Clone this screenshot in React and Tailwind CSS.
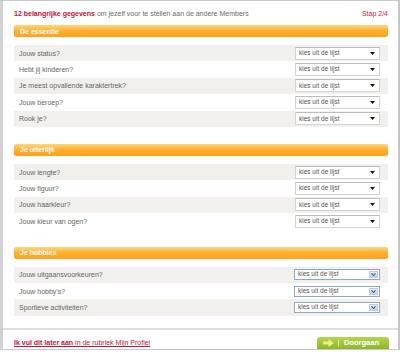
import React from 'react';

const sections = [
  {
    title: 'De essentie',
    kind: 'plain',
    rows: ['Jouw status?', 'Hebt jij kinderen?', 'Je meest opvallende karaktertrek?', 'Jouw beroep?', 'Rook je?'],
  },
  {
    title: 'Je uiterlijk',
    kind: 'plain',
    rows: ['Jouw lengte?', 'Jouw figuur?', 'Jouw haarkleur?', 'Jouw kleur van ogen?'],
  },
  {
    title: 'Je hobbies',
    kind: 'xp',
    rows: ['Jouw uitgaansvoorkeuren?', "Jouw hobby's?", 'Sportieve activiteiten?'],
  },
];

const PlainSelect = () => (
  <div className="w-[85px] h-[13px] bg-white border border-[#d2d2d2] border-t-[#bcbcbc] flex items-center justify-between pl-[3px] pr-[4px]">
    <span className="text-[6.5px] text-[#555] leading-none">kies uit de lijst</span>
    <svg width="5" height="3" viewBox="0 0 5 3">
      <path d="M0 0h5L2.5 3z" fill="#111" />
    </svg>
  </div>
);

const XpSelect = () => (
  <div className="w-[86px] h-[11px] bg-white border border-[#8fa8c6] flex items-stretch">
    <span className="flex-1 pl-[3px] flex items-center text-[6.5px] text-[#555] leading-none">kies uit de lijst</span>
    <span className="w-[9px] m-[1px] bg-gradient-to-b from-[#e3ebfb] to-[#c0d1f0] border border-[#bccbea] flex items-center justify-center">
      <svg width="5" height="3" viewBox="0 0 5 3">
        <path d="M0.5 0.3L2.5 2.5L4.5 0.3" stroke="#4d6185" strokeWidth="1.1" fill="none" />
      </svg>
    </span>
  </div>
);

const Section = ({ title, kind, rows }) => (
  <div>
    <div className="h-[12px] rounded-[2px] bg-gradient-to-b from-[#ffd77a] via-[#ffae2c] to-[#ffa21a] flex items-center pl-[6px]">
      <span className="text-[7px] font-bold text-white leading-none">{title}</span>
    </div>
    <div className="mt-[8px]">
      {rows.map((label, i) => (
        <div
          key={label}
          className={`h-[16.4px] flex items-center justify-between pl-[5px] pr-[8px] ${i % 2 === 0 ? 'bg-[#f1f0ec]' : 'bg-white'}`}
        >
          <span className="text-[7px] text-[#666] leading-none">{label}</span>
          {kind === 'xp' ? <XpSelect /> : <PlainSelect />}
        </div>
      ))}
    </div>
  </div>
);

export default function App() {
  return (
    <div
      className="w-[400px] h-[352px] bg-white overflow-hidden"
      style={{ fontFamily: '"Liberation Sans", Arial, sans-serif' }}
    >
      <div className="h-[350px] border-t border-t-[#c8c8c8] border-l-[3px] border-l-[#d2d2d2] border-r-[2px] border-r-[#c6c6c6] border-b border-b-[#c8c8c8] flex flex-col">
        <div className="pl-[11px] pr-[10px]">
          <div className="h-[19px] pt-[6px] flex items-center justify-between">
            <p className="text-[7px] leading-none text-[#6a6a6a]">
              <span className="font-bold text-[#c0123a]">12 belangrijke gegevens</span> om jezelf voor te stellen aan de andere Members
            </p>
            <span className="text-[7px] leading-none text-[#d0203f]">Stap 2/4</span>
          </div>
          <div className="mt-[5px] flex flex-col gap-[17px]">
            {sections.map((s) => (
              <Section key={s.title} {...s} />
            ))}
          </div>
        </div>
        <div className="mt-[12px] border-t-[2px] border-t-[#dedede] flex-1 flex items-end justify-between pl-[11px] pr-[9px]">
          <p className="text-[7px] leading-none text-[#c0123a] underline pb-[3px]">
            <span className="font-bold">Ik vul dit later aan</span> in de rubriek Mijn Profiel
          </p>
          <div className="w-[72px] h-[12px] rounded-t-[3px] bg-gradient-to-b from-[#b4d64a] to-[#8db62a] flex items-center pl-[6px]">
            <svg width="11" height="8" viewBox="0 0 11 8">
              <path d="M0 2.5h5.5V0L11 4 5.5 8V5.5H0z" fill="#e9f27a" />
            </svg>
            <span className="w-px h-[7px] bg-[#d6ea95] ml-[4px]" />
            <span className="ml-[5px] text-[7.5px] font-bold text-white leading-none">Doorgaan</span>
          </div>
        </div>
      </div>
    </div>
  );
}
